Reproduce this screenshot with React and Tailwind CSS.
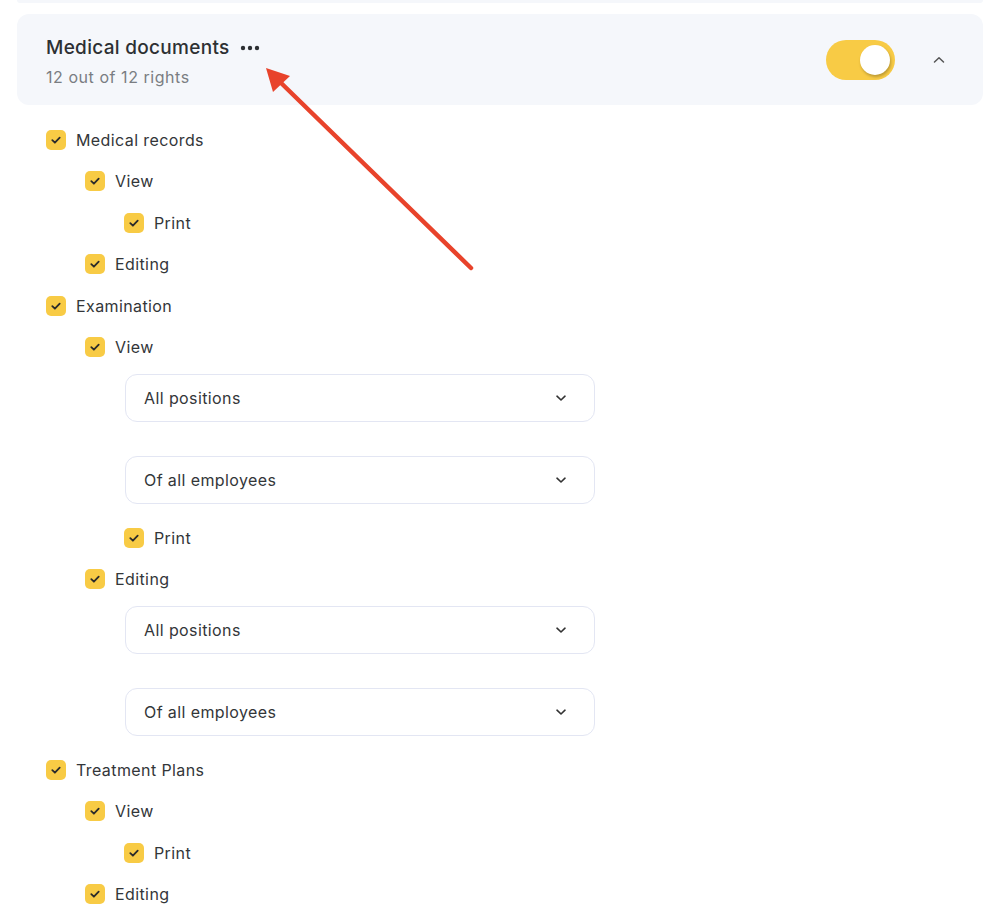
import React from "react";

function Check() {
  return (
    <span className="flex h-[20px] w-[20px] shrink-0 items-center justify-center rounded-[5px] bg-[#f8cb45]">
      <svg width="12" height="12" viewBox="0 0 12 12" fill="none">
        <path d="M2.3 6.2 L4.9 8.7 L9.7 3.7" stroke="#2b2b2b" strokeWidth="1.8" strokeLinecap="round" strokeLinejoin="round" />
      </svg>
    </span>
  );
}

function Row({ level = 0, label }) {
  const indent = level === 0 ? "pl-[29px]" : level === 1 ? "pl-[68px]" : "pl-[107px]";
  return (
    <div className={`flex h-[41.5px] items-center gap-[10px] ${indent}`}>
      <Check />
      <span className="text-[16px] tracking-[0.4px] text-[#333639]">{label}</span>
    </div>
  );
}

function Select({ label }) {
  return (
    <div className="ml-[108px] flex h-[48px] w-[470px] items-center justify-between rounded-[12px] border border-[#e3e6f3] bg-white pl-[18px] pr-[26px]">
      <span className="text-[16px] tracking-[0.4px] text-[#333639]">{label}</span>
      <svg width="14" height="14" viewBox="0 0 14 14" fill="none">
        <path d="M3 5.2 L7 9 L11 5.2" stroke="#333" strokeWidth="1.6" strokeLinecap="round" strokeLinejoin="round" />
      </svg>
    </div>
  );
}

function Selects() {
  return (
    <div className="mb-[13px] mt-[6px] flex flex-col gap-[34px]">
      <Select label="All positions" />
      <Select label="Of all employees" />
    </div>
  );
}

export default function App() {
  return (
    <div className="relative min-h-[923px] w-[1000px] bg-white px-[17px] font-['Inter',sans-serif]">
      <div className="h-[3px] rounded-b-[12px] bg-[#f5f7fb]" />
      <div className="mt-[11px] flex h-[91px] items-center justify-between rounded-[12px] bg-[#f5f7fb] pl-[29px] pr-[36px]">
        <div className="flex flex-col pt-[5px]">
          <div className="flex items-center gap-[10px]">
            <span className="text-[19px] leading-[24px] font-medium tracking-[0.3px] text-[#2d3033]">Medical documents</span>
            <svg width="20" height="6" viewBox="0 0 20 6">
              <circle cx="3" cy="3" r="2.2" fill="#2d3033" />
              <circle cx="10" cy="3" r="2.2" fill="#2d3033" />
              <circle cx="17" cy="3" r="2.2" fill="#2d3033" />
            </svg>
          </div>
          <span className="mt-[5px] text-[16px] leading-[24px] tracking-[0.55px] text-[#7a7d82]">12 out of 12 rights</span>
        </div>
        <div className="flex items-center gap-[36px]">
          <div className="flex h-[40px] w-[69px] items-center justify-end rounded-full bg-[#f8cb45] pr-[5px]">
            <span className="h-[30px] w-[30px] rounded-full bg-white shadow-[1px_2px_3px_rgba(0,0,0,0.25)]" />
          </div>
          <svg width="16" height="16" viewBox="0 0 16 16" fill="none">
            <path d="M3.5 10 L8 5.8 L12.5 10" stroke="#555" strokeWidth="1.5" strokeLinecap="round" strokeLinejoin="round" />
          </svg>
        </div>
      </div>

      <div className="mt-[14px] flex flex-col">
        <Row level={0} label="Medical records" />
        <Row level={1} label="View" />
        <Row level={2} label="Print" />
        <Row level={1} label="Editing" />
        <Row level={0} label="Examination" />
        <Row level={1} label="View" />
        <Selects />
        <Row level={2} label="Print" />
        <Row level={1} label="Editing" />
        <Selects />
        <Row level={0} label="Treatment Plans" />
        <Row level={1} label="View" />
        <Row level={2} label="Print" />
        <Row level={1} label="Editing" />
      </div>

      <svg className="pointer-events-none absolute left-0 top-0" width="1000" height="923" viewBox="0 0 1000 923">
        <line x1="471" y1="268" x2="278" y2="80" stroke="#e8432b" strokeWidth="4.5" strokeLinecap="round" />
        <polygon points="266,68 290,76 273,92" fill="#e8432b" />
      </svg>
    </div>
  );
}
